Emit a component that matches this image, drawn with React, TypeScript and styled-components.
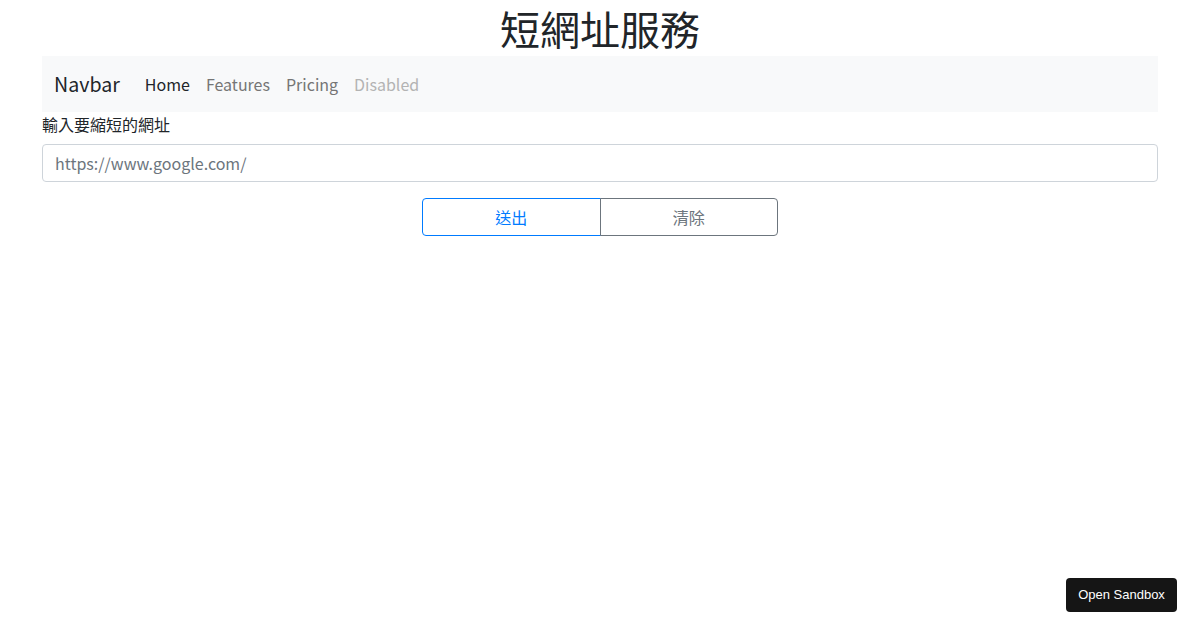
import styled, { createGlobalStyle } from 'styled-components'
import { useState } from 'react'

const GlobalStyle = createGlobalStyle`
  body {
    margin: 0;
    font-family: "Noto Sans CJK TC", "Noto Sans", sans-serif;
    color: #212529;
    background: #fff;
    font-size: 16px;
  }
  * { box-sizing: border-box; }
`

const links = [
  { label: 'Home', state: 'active' },
  { label: 'Features', state: 'normal' },
  { label: 'Pricing', state: 'normal' },
  { label: 'Disabled', state: 'disabled' },
]

const App = () => {
  const [url, setUrl] = useState('')

  return (
    <>
      <GlobalStyle />
      <Container>
        <Title>短網址服務</Title>
        <Navbar>
          <Brand>Navbar</Brand>
          <NavList>
            {links.map((l) => (
              <NavLink key={l.label} $state={l.state}>{l.label}</NavLink>
            ))}
          </NavList>
        </Navbar>
        <Label htmlFor="url">輸入要縮短的網址</Label>
        <Input
          id="url"
          placeholder="https://www.google.com/"
          value={url}
          onChange={(e) => setUrl(e.target.value)}
        />
        <ButtonRow>
          <ButtonGroup>
            <GroupButton $variant="primary">送出</GroupButton>
            <GroupButton $variant="secondary" onClick={() => setUrl('')}>清除</GroupButton>
          </ButtonGroup>
        </ButtonRow>
      </Container>
      <SandboxButton>Open Sandbox</SandboxButton>
    </>
  )
}

export default App

const Container = styled.div`
  width: 1116px;
  margin: 0 auto;
  display: flex;
  flex-direction: column;
`

const Title = styled.h1`
  margin: 0;
  height: 56px;
  font-size: 40px;
  font-weight: 400;
  line-height: 56px;
  text-align: center;
`

const Navbar = styled.nav`
  height: 56px;
  background: #f8f9fa;
  display: flex;
  align-items: center;
  padding: 0 12px;
`

const Brand = styled.a`
  font-size: 19.6px;
  color: #212529;
  margin-right: 17px;
  line-height: 1;
`

const NavList = styled.div`
  display: flex;
`

const NavLink = styled.a<{ $state: string }>`
  font-size: 16px;
  padding: 0 8px;
  color: ${(p) =>
    p.$state === 'active' ? '#212529' : p.$state === 'disabled' ? '#b3b3b3' : '#757575'};
`

const Label = styled.label`
  margin-top: 2px;
  font-size: 16px;
  line-height: 20px;
`

const Input = styled.input`
  margin-top: 10px;
  height: 38px;
  width: 100%;
  border: 1px solid #ced4da;
  border-radius: 4px;
  padding: 0 12px;
  font-family: inherit;
  font-size: 16px;
  color: #495057;
  outline: none;
  &::placeholder { color: #6c757d; }
`

const ButtonRow = styled.div`
  display: flex;
  justify-content: center;
  margin-top: 16px;
`

const ButtonGroup = styled.div`
  display: flex;
  width: 356px;
`

const GroupButton = styled.button<{ $variant: 'primary' | 'secondary' }>`
  flex: 1;
  height: 38px;
  background: transparent;
  font-family: inherit;
  font-size: 16px;
  cursor: pointer;
  border: 1px solid ${(p) => (p.$variant === 'primary' ? '#007bff' : '#6c757d')};
  color: ${(p) => (p.$variant === 'primary' ? '#007bff' : '#6c757d')};
  border-radius: ${(p) => (p.$variant === 'primary' ? '4px 0 0 4px' : '0 4px 4px 0')};
  margin-left: ${(p) => (p.$variant === 'primary' ? '0' : '-1px')};
`

const SandboxButton = styled.button`
  position: fixed;
  right: 23px;
  bottom: 18px;
  width: 111px;
  height: 34px;
  padding: 0 0 2px;
  background: #151515;
  color: #fff;
  border: none;
  border-radius: 4px;
  font-family: "Liberation Sans", Arial, sans-serif;
  font-size: 13px;
`
